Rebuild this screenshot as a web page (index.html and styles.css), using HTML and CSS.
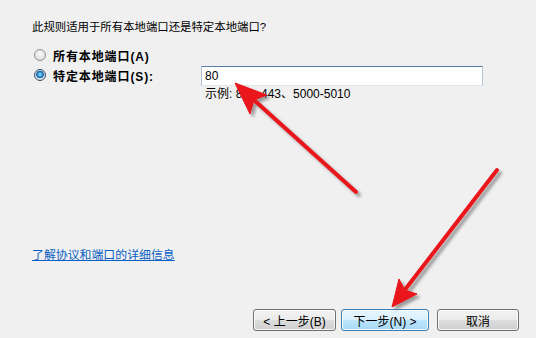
FILE: index.html
```html
<!DOCTYPE html>
<html lang="zh">
<head>
    <meta charset="UTF-8">
    <title>端口</title>
    <link rel="stylesheet" href="styles.css">
</head>
<body>

<div class="page">
    <p class="question">此规则适用于所有本地端口还是特定本地端口?</p>

    <div class="options">
        <label class="option">
            <span class="radio"></span>
            <span class="option-text">所有本地端口(A)</span>
        </label>
        <div class="option-row">
            <label class="option option-fixed">
                <span class="radio checked"></span>
                <span class="option-text">特定本地端口(S):</span>
            </label>
            <div class="port-field">
                <input class="port-input" type="text" value="80">
                <div class="port-hint">示例: 80、443、5000-5010</div>
            </div>
        </div>
    </div>

    <a class="more-link" href="#">了解协议和端口的详细信息</a>

    <div class="buttons">
        <button class="btn btn-back">&lt; 上一步(B)</button>
        <button class="btn btn-next">下一步(N) &gt;</button>
        <button class="btn btn-cancel">取消</button>
    </div>

    <!-- red arrows drawn over the dialog -->
    <svg class="arrows" width="536" height="338" viewBox="0 0 536 338">
        <defs>
            <filter id="shadow" x="-20%" y="-20%" width="140%" height="140%">
                <feDropShadow dx="3" dy="3" stdDeviation="1.6" flood-color="#555" flood-opacity="0.55"/>
            </filter>
        </defs>
        <g filter="url(#shadow)" fill="#e9131b" stroke="#e9131b">
            <line x1="356" y1="192" x2="254" y2="100" stroke-width="4" stroke-linecap="round"/>
            <polygon points="235,83 267,95 254,100 250,114" stroke-width="1" stroke-linejoin="round"/>
            <line x1="497" y1="170" x2="404" y2="291" stroke-width="4" stroke-linecap="round"/>
            <polygon points="392,307 399,279 405,290 417,294" stroke-width="1" stroke-linejoin="round"/>
        </g>
    </svg>
</div>

</body>
</html>
```

FILE: styles.css
```css
body {
    margin: 0;
    background-color: #f0f0f0;
    font-family: "Liberation Sans", "Noto Sans CJK SC", sans-serif;
    color: #000;
}
.page {
    position: relative;
    height: 338px;
    box-sizing: border-box;
    padding: 19px 17px 7px 32px;
    display: flex;
    flex-direction: column;
}
.question {
    margin: 0;
    font-size: 11.4px;
    line-height: 16px;
}
.options {
    margin-top: 10px;
    display: flex;
    flex-direction: column;
}
.option {
    display: flex;
    align-items: center;
    height: 20px;
    font-size: 12px;
    font-weight: bold;
}
.option-text {
    letter-spacing: 0.9px;
}
.option-row {
    display: flex;
    align-items: flex-start;
}
.option-fixed {
    width: 169px;
    flex: none;
}
.radio {
    width: 12px;
    height: 12px;
    margin: 0 7px 0 2px;
    border: 1px solid #8e8f8f;
    border-radius: 50%;
    box-sizing: border-box;
    background: radial-gradient(circle at 50% 40%, #fafafa 0%, #e6e6e6 60%, #d2d2d2 100%);
}
.radio.checked {
    border-color: #3c4d63;
    background: radial-gradient(circle at 50% 45%, #9ee4ff 0%, #2f9ad8 30%, #1a5a99 48%, #e4eaf0 56%, #d7dde4 100%);
}
.port-field {
    width: 282px;
    padding-top: 1px;
}
.port-input {
    display: block;
    width: 100%;
    height: 20px;
    box-sizing: border-box;
    padding: 0 3px;
    border: 1px solid;
    border-color: #577ea8 #b6c6d8 #dfe6ee #b6c6d8;
    background-color: #fff;
    font-family: "Liberation Sans", "Noto Sans CJK SC", sans-serif;
    font-size: 12px;
    outline: none;
}
.port-hint {
    padding-left: 4px;
    font-size: 12px;
    line-height: 16px;
}
.more-link {
    margin-top: auto;
    margin-bottom: 46px;
    align-self: flex-start;
    font-size: 11.9px;
    line-height: 16px;
    color: #0a5fc4;
    text-decoration: underline;
}
.buttons {
    display: flex;
    justify-content: flex-end;
}
.btn {
    height: 22px;
    padding: 0;
    border: 1px solid #707070;
    border-radius: 3px;
    background: linear-gradient(#f3f3f3 0%, #ebebeb 49%, #dddddd 50%, #cfcfcf 100%);
    box-shadow: inset 0 0 0 1px rgba(255, 255, 255, 0.8);
    font-family: "Liberation Sans", "Noto Sans CJK SC", sans-serif;
    font-size: 12px;
    color: #000;
    cursor: pointer;
}
.btn-back {
    width: 83px;
}
.btn-next {
    width: 88px;
    margin-left: 5px;
    border-color: #3c7fb1;
    background: linear-gradient(#eaf6fd 0%, #d9f0fc 49%, #bee6fd 50%, #a7d9f5 100%);
}
.btn-cancel {
    width: 82px;
    margin-left: 8px;
}
.arrows {
    position: absolute;
    top: 0;
    left: 0;
    pointer-events: none;
}
```
